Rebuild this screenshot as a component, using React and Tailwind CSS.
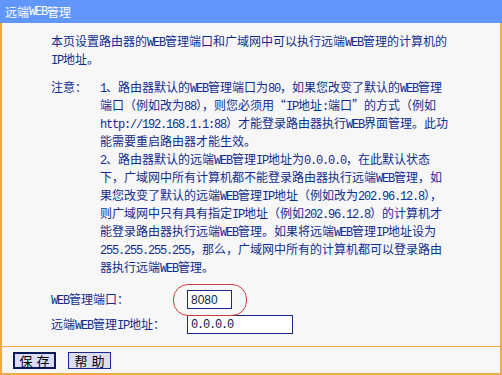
import React from "react";

const T = ({ s }) =>
  s.split(/([\x00-\x7F]+)/).map((p, i) =>
    /^[\x00-\x7F]+$/.test(p) ? (
      <span key={i} className="font-['Liberation_Mono',monospace] tracking-[-1.2px]">
        {p}
      </span>
    ) : (
      <React.Fragment key={i}>{p}</React.Fragment>
    )
  );

const Line = ({ s }) => (
  <div className="h-[18px] leading-[18px] whitespace-nowrap">
    <T s={s} />
  </div>
);

const notes = [
  "1、路由器默认的WEB管理端口为80，如果您改变了默认的WEB管理",
  "端口（例如改为88），则您必须用“IP地址:端口”的方式（例如",
  "http://192.168.1.1:88）才能登录路由器执行WEB界面管理。此功",
  "能需要重启路由器才能生效。",
  "2、路由器默认的远端WEB管理IP地址为0.0.0.0，在此默认状态",
  "下，广域网中所有计算机都不能登录路由器执行远端WEB管理，如",
  "果您改变了默认的远端WEB管理IP地址（例如改为202.96.12.8），",
  "则广域网中只有具有指定IP地址（例如202.96.12.8）的计算机才",
  "能登录路由器执行远端WEB管理。如果将远端WEB管理IP地址设为",
  "255.255.255.255，那么，广域网中所有的计算机都可以登录路由",
  "器执行远端WEB管理。",
];

export default function App() {
  return (
    <div className="w-[502px] h-[375px] flex flex-col overflow-hidden font-['Noto_Sans_CJK_SC',sans-serif] text-[12px] bg-[#f7f7f7]">
      <div className="h-[23px] shrink-0 bg-[#6196fb] text-white pl-[5px] flex items-center leading-none">
        <T s="远端WEB管理" />
      </div>
      <div className="flex-1 flex flex-col border-x-2 border-b-2 border-[#f0a848]">
        <div className="h-[324px] shrink-0 border-b border-[#f0a848] pt-[9px] pl-[49px] text-[#102c90]">
          <Line s="本页设置路由器的WEB管理端口和广域网中可以执行远端WEB管理的计算机的" />
          <Line s="IP地址。" />
          <div className="mt-[10px] flex">
            <div className="w-[49px] h-[18px] leading-[18px]">注意：</div>
            <div>
              {notes.map((n, i) => (
                <Line key={i} s={n} />
              ))}
            </div>
          </div>
          <div className="mt-[11px] flex items-center h-[25px]">
            <div className="w-[136px] whitespace-nowrap">
              <T s="WEB管理端口：" />
            </div>
            <div className="relative">
              <span className="absolute left-[-14px] top-[-6px] w-[74px] h-[32px] rounded-[15px] border border-[#d03a3a]"></span>
              <div className="w-[45px] h-[19px] border border-[#1b2a8a] bg-white pl-[3px] flex items-center text-[#111a44] font-['Liberation_Sans',sans-serif] text-[12px]">
                8080
              </div>
            </div>
          </div>
          <div className="flex items-center h-[25px]">
            <div className="w-[136px] whitespace-nowrap">
              <T s="远端WEB管理IP地址：" />
            </div>
            <div className="w-[106px] h-[19px] border border-[#1b2a8a] bg-white pl-[3px] flex items-center text-[#111a44]">
              <T s="0.0.0.0" />
            </div>
          </div>
        </div>
        <div className="flex-1 flex items-center pl-[11px] gap-[12px]">
          <div className="w-[43px] h-[17px] border-2 border-[#0b1a5a] bg-[#dcdcf6] flex items-center justify-center text-black leading-none text-[13px] tracking-[4px] pl-[4px]">
            保存
          </div>
          <div className="w-[43px] h-[17px] border border-[#1b2a8a] bg-[#dcdcf6] flex items-center justify-center text-black leading-none text-[13px] tracking-[4px] pl-[4px]">
            帮助
          </div>
        </div>
      </div>
    </div>
  );
}
